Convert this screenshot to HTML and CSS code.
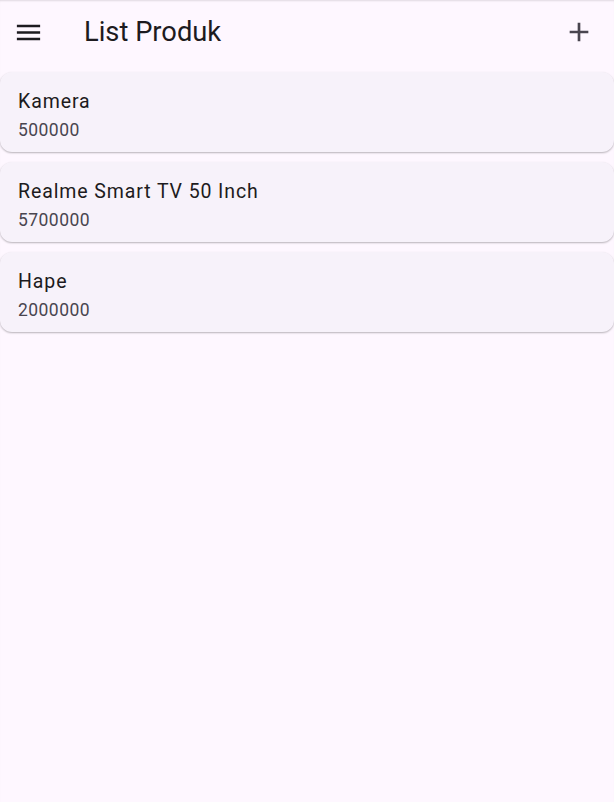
FILE: index.html
```html
<!DOCTYPE html>
<html>
<head>
<meta charset="utf-8">
<link rel="stylesheet" href="styles.css">
</head>
<body>
<header class="appbar">
  <button class="icon-btn menu" aria-label="menu">
    <svg width="31" height="31" viewBox="0 0 24 24"><path d="M3 18h18v-2H3v2zm0-5h18v-2H3v2zm0-7v2h18V6H3z" fill="#1d1b20"/></svg>
  </button>
  <h1 class="title">List Produk</h1>
  <button class="icon-btn add" aria-label="add">
    <svg width="32" height="32" viewBox="0 0 24 24"><path d="M19 13h-6v6h-2v-6H5v-2h6V5h2v6h6v2z" fill="#49454f"/></svg>
  </button>
</header>
<main class="list">
  <div class="card"><div class="name">Kamera</div><div class="price">500000</div></div>
  <div class="card"><div class="name">Realme Smart TV 50 Inch</div><div class="price">5700000</div></div>
  <div class="card"><div class="name">Hape</div><div class="price">2000000</div></div>
</main>
</body>
</html>
```
FILE: styles.css
```css
* { box-sizing: border-box; }
html, body { margin: 0; padding: 0; }
body {
  background: #fef7ff;
  font-family: Roboto, "Noto Sans", sans-serif;
  color: #1d1b20;
  width: 614px;
  height: 802px;
  overflow: hidden;
  box-shadow: inset 0 2px 2px -1px rgba(0,0,0,0.12);
}
.appbar {
  height: 64px;
  display: flex;
  align-items: center;
  padding: 0 0 0 4px;
}
.icon-btn {
  width: 48px; height: 48px;
  border: 0; background: none; padding: 0;
  display: flex; align-items: center; justify-content: center;
}
.add { margin-right: 11px; }
.title {
  margin: 2px 0 0 32px;
  font-size: 27.3px;
  font-weight: 400;
  flex: 1;
  line-height: 1;
}
.list {
  display: flex;
  flex-direction: column;
  gap: 10px;
  padding-top: 8px;
}
.card {
  height: 80px;
  background: #f7f2fa;
  border-radius: 12px;
  box-shadow: 0 1px 2px rgba(0,0,0,0.28);
  padding: 18px 18px 0;
}
.name {
  font-size: 19.5px;
  letter-spacing: 0.9px;
  line-height: 24px;
}
.price {
  margin-top: 5px;
  font-size: 17.5px;
  letter-spacing: 0.45px;
  color: #49454f;
  line-height: 22px;
}
```
